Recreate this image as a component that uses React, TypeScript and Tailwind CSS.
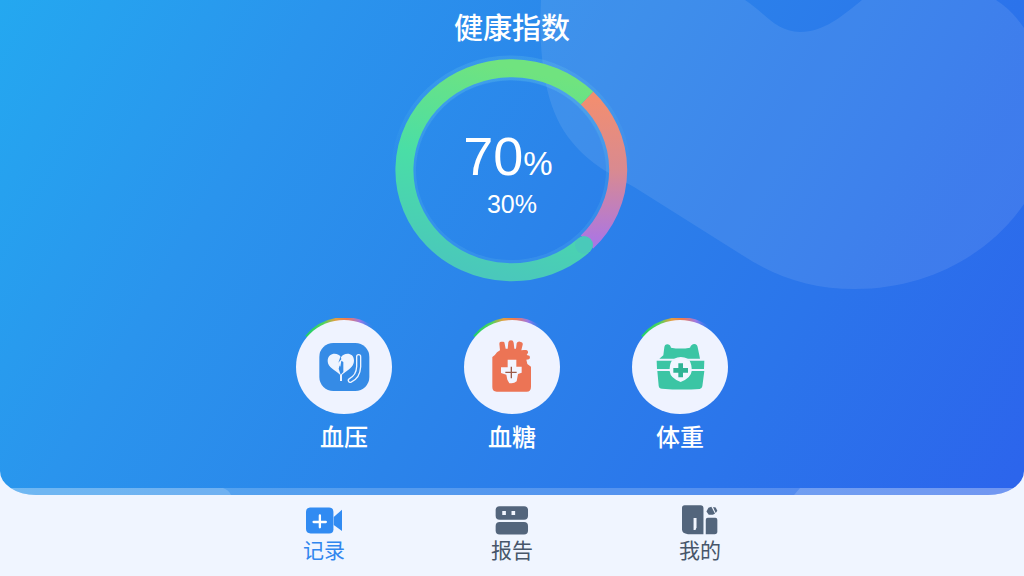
import type { ReactNode } from "react";

interface Item {
  id: string;
  label: string;
  icon: ReactNode;
}

const metrics: Item[] = [
  { id: "pressure", label: "血压", icon: <PressureIcon /> },
  { id: "sugar", label: "血糖", icon: <SugarIcon /> },
  { id: "weight", label: "体重", icon: <WeightIcon /> },
];

const tabs: Item[] = [
  { id: "record", label: "记录", icon: <RecordIcon /> },
  { id: "report", label: "报告", icon: <ReportIcon /> },
  { id: "mine", label: "我的", icon: <MineIcon /> },
];

function PressureIcon() {
  return (
    <g>
      <rect x="70" y="75" width="150" height="144" rx="42" fill="#358be6" />
      <path
        d="M135 118C128 103 95 102 95 129C95 148 118 157 132 170V189H138V170C152 157 174 148 174 128C174 102 143 103 135 118Z"
        fill="#eef4ff"
      />
      <path d="M134 114L136 124L127 134L133 146L136 128L142 132V162L134 170L128 152L131 142L127 134Z" fill="#358be6" />
      <g fill="none" strokeLinecap="round">
        <path d="M188 116V146C187 166 178 180 163 187" stroke="#eef4ff" strokeWidth="16" />
        <path d="M188 116V146C187 166 178 180 163 187" stroke="#358be6" strokeWidth="8" />
      </g>
    </g>
  );
}

function SugarIcon() {
  return (
    <g>
      <path
        d="M85 117Q93 113 99 103L108 97L106 77Q106 71 111 71H118Q122 71 122 77L125 92H131L133 73Q134 67 141 67Q148 67 149 74L151 92H156L158 76Q160 70 168 71Q178 72 176 80L172 97L180 96L187 96Q193 98 192 104L188 111L196 113Q200 119 195 124L187 125L190 138L201 146V206Q201 221 188 221H98Q85 221 85 207Z"
        fill="#ec7455"
      />
      <path
        d="M131 125H157V146H173V164L162 168L158 190Q151 196 143 196H136L130 185L127 170L111 165V148H131Z"
        fill="#f3f5ff"
      />
      <path d="M124 163H158M142 146V181" stroke="#9c5a48" strokeWidth="4" />
    </g>
  );
}

function WeightIcon() {
  return (
    <g>
      <path
        d="M82 122L94 112L97 88Q98 79 106 79Q114 79 117 89Q145 94 174 89Q178 78 187 78Q196 79 197 88L202 112L204 122H168Q146 112 126 122Z"
        fill="#3bc5a4"
      />
      <path d="M74 128H217L216 153H75Z" fill="#3bc5a4" />
      <path d="M76 159H217L211 205Q210 212 203 213Q146 217 90 212Q81 212 80 203Z" fill="#3bc5a4" />
      <path
        d="M146 119Q158 127 172 127Q180 139 179 160Q177 180 146 192Q115 181 113 160Q112 140 120 127Q134 127 146 119Z"
        fill="#f1f6ff"
      />
      <path d="M146 136V178M124 157H168" stroke="#2fb495" strokeWidth="14" />
    </g>
  );
}

function RecordIcon() {
  return (
    <g fill="#318bf2">
      <path d="M12 7H70Q83 7 83 20V73Q83 86 70 86H14Q0 84 0 72V20Q0 8 12 7Z" />
      <path d="M84 36L109 14V78L84 60Z" />
      <path d="M42 31V67M23 51H60" stroke="#fff" strokeWidth="7" strokeLinecap="round" />
    </g>
  );
}

function ReportIcon() {
  return (
    <g fill="#53657c">
      <rect x="5" y="3" width="98" height="41" rx="12" />
      <rect x="5" y="51" width="98" height="38" rx="12" />
      <path d="M25 18H36V30H25ZM53 18H64V30H53Z" fill="#f2f6ff" />
    </g>
  );
}

function MineIcon() {
  return (
    <g fill="#53657c">
      <path d="M8 0H56Q65 0 65 9V88H18Q0 86 0 74V8Q0 0 8 0Z" />
      <path d="M35 39H44V67L41 75H35Z" fill="#f2f6ff" />
      <path d="M78 38H101Q107 38 107 44V80Q107 88 99 88H72V45Q72 38 78 38Z" />
      <path d="M74 19L80 8L89 5L100 26L93 29H81Z" />
      <path d="M94 6L102 7L107 17L102 24Z" />
    </g>
  );
}

function ScoreRing() {
  return (
    <div className="grid place-items-center">
      <svg width="240" height="232" viewBox="0 0 240 232" fill="none" className="col-start-1 row-start-1" aria-hidden="true">
        <defs>
          <linearGradient id="good" x1="0.6" y1="0" x2="0.4" y2="1">
            <stop offset="0" stopColor="#70e37f" />
            <stop offset="0.5" stopColor="#4adea6" />
            <stop offset="1" stopColor="#4ac8bb" />
          </linearGradient>
          <linearGradient id="rest" x1="0" y1="0" x2="0" y2="1">
            <stop offset="0" stopColor="#f28e70" />
            <stop offset="0.5" stopColor="#d98a90" />
            <stop offset="1" stopColor="#ac76e2" />
          </linearGradient>
          <linearGradient id="track" x1="0" y1="0" x2="0" y2="1">
            <stop offset="0" stopColor="#6fd0e8" stopOpacity="0.2" />
            <stop offset="0.5" stopColor="#6fd0e8" stopOpacity="0" />
          </linearGradient>
        </defs>
        <ellipse cx="119" cy="116" rx="107" ry="102" stroke="url(#track)" strokeWidth="25" />
        <ellipse cx="119" cy="116" rx="97" ry="92" stroke="#6fd0e8" strokeOpacity="0.15" strokeWidth="4" />
        <path d="M195 44A107 102 0 0 1 195 188" stroke="url(#rest)" strokeWidth="18" />
        <path d="M195 44A107 102 0 1 0 191 192" stroke="url(#good)" strokeWidth="18" />
        <circle cx="192" cy="191" r="9" fill="#4ac9ba" />
      </svg>
      <div className="col-start-1 row-start-1 flex flex-col items-center pt-1 font-['Liberation_Sans',sans-serif]">
        <p className="pr-2 text-[54px] leading-14">
          70<span className="text-[33px]">%</span>
        </p>
        <p className="text-[25px] leading-6">30%</p>
      </div>
    </div>
  );
}

function Metric({ item }: { item: Item }) {
  return (
    <button type="button" className="flex cursor-pointer flex-col items-center gap-2">
      <svg width="96" height="96" viewBox="0 0 288 288" aria-hidden="true">
        <path d="M34 55A144 144 0 0 1 232 32" fill="none" stroke="url(#rainbow)" strokeWidth="16" transform="translate(0 3)" />
        <ellipse cx="144" cy="147" rx="144" ry="141" fill="#eff3ff" />
        {item.icon}
      </svg>
      <span className="text-2xl leading-7 font-medium">{item.label}</span>
    </button>
  );
}

export default function App() {
  return (
    <div className="flex min-h-screen flex-col bg-[#f0f5ff] font-['Noto_Sans_CJK_SC',sans-serif]">
      <main className="relative flex flex-1 flex-col items-center overflow-hidden rounded-b-[36px_24px] bg-[linear-gradient(120deg,#24a8f0_0%,#2a94ed_25%,#2b84ea_50%,#2b75eb_75%,#2c64ec_100%)] pt-2 pb-[45px] text-white">
        <svg className="absolute inset-0 h-full w-full" viewBox="0 0 1024 495" preserveAspectRatio="none" aria-hidden="true">
          <defs>
            <linearGradient id="rainbow" x1="0" y1="0" x2="1" y2="0">
              <stop offset="0" stopColor="#22d06a" />
              <stop offset="0.25" stopColor="#4fd45c" />
              <stop offset="0.42" stopColor="#e0a040" />
              <stop offset="0.6" stopColor="#f07a50" />
              <stop offset="0.8" stopColor="#9a78e8" />
              <stop offset="1" stopColor="#4a80ee" stopOpacity="0" />
            </linearGradient>
          </defs>
          <path
            d="M541 0C538 60 546 112 572 142C590 164 610 174 634 187L742 255C776 277 812 289 855 289C928 289 990 254 1024 204V28Q1012 10 996 0H862C842 16 824 32 800 32C776 32 764 12 745 0Z"
            fill="#fff"
            fillOpacity="0.09"
          />
          <path d="M0 488H1024V495H0Z" fill="#fff" fillOpacity="0.2" />
          <path d="M0 488H223Q229 490 231 495H0ZM800 488H1024V495H794Z" fill="#fff" fillOpacity="0.16" />
        </svg>

        <div className="relative flex flex-col items-center">
          <h1 className="mb-2.5 text-[29px] leading-9 font-medium">健康指数</h1>
          <ScoreRing />
          <div className="mt-8 flex gap-18">
            {metrics.map((item) => (
              <Metric key={item.id} item={item} />
            ))}
          </div>
        </div>
      </main>

      <nav className="flex justify-center gap-[146px] pt-2.5 pb-[15px]">
        {tabs.map((tab) => (
          <a
            key={tab.id}
            href={`#${tab.id}`}
            className={`flex flex-col items-center gap-0.5 ${tab.id === "record" ? "text-[#3086ee]" : "text-[#47566a]"}`}
          >
            <svg width="36" height="30" viewBox="0 0 109 90" aria-hidden="true">
              {tab.icon}
            </svg>
            <span className="text-[21px] leading-6">{tab.label}</span>
          </a>
        ))}
      </nav>
    </div>
  );
}
